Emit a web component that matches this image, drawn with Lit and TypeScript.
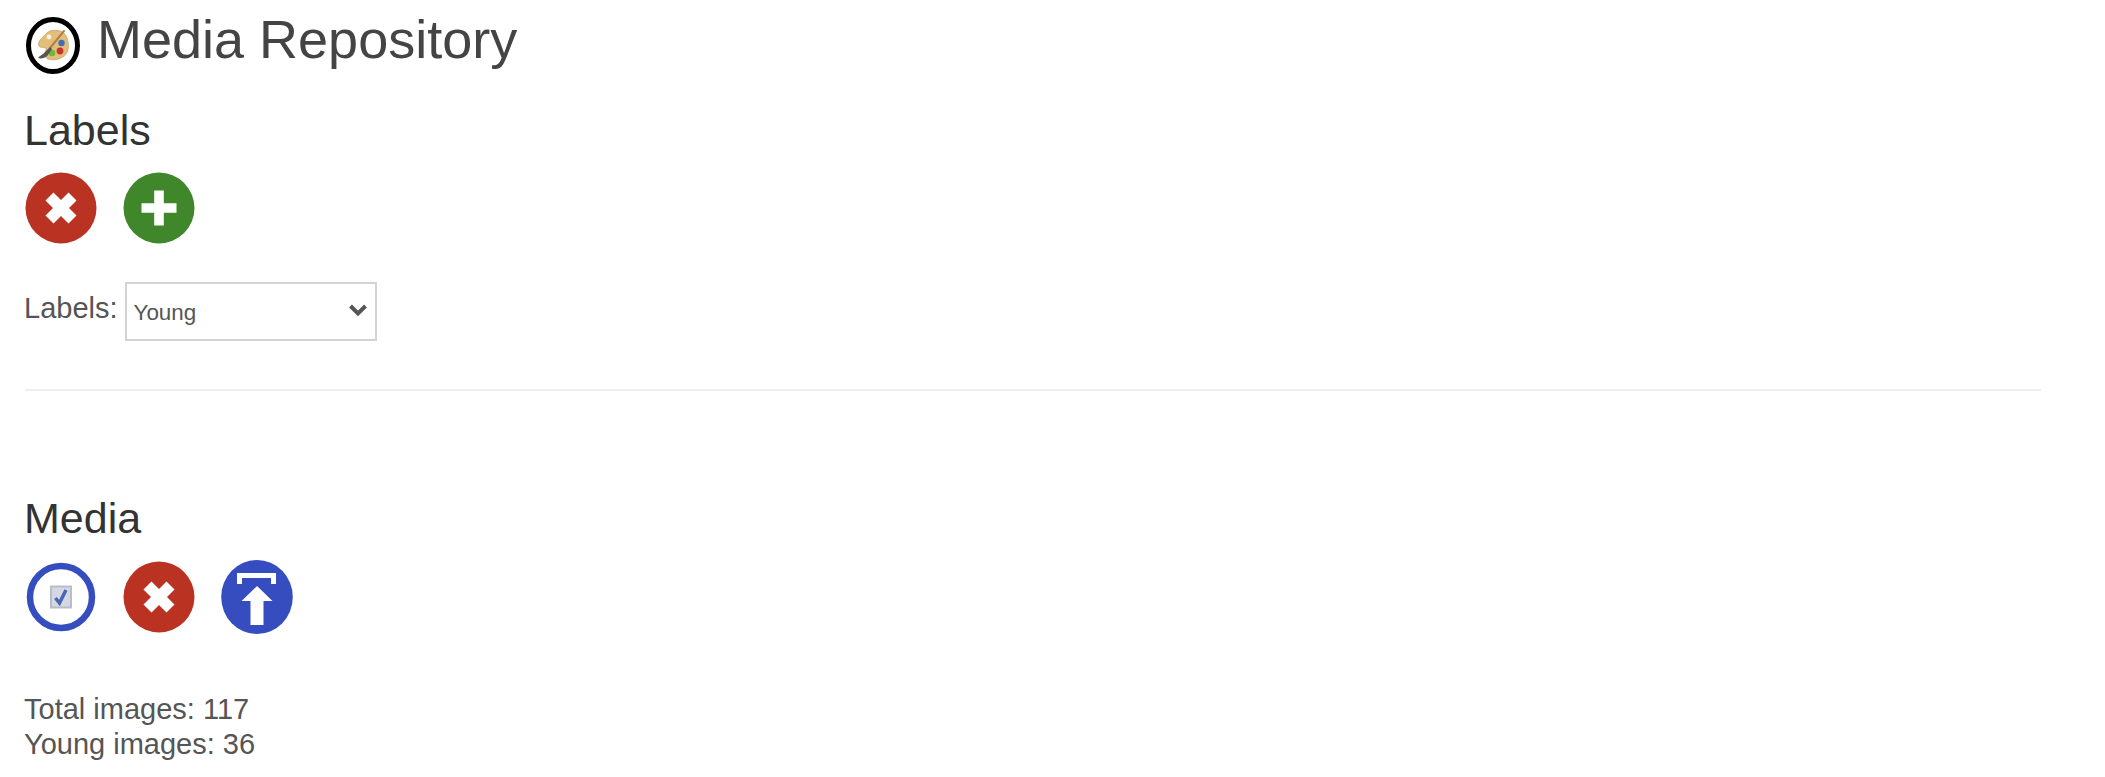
import { LitElement, html, css, svg } from "lit";
import { customElement } from "lit/decorators.js";

const removeIcon = svg`<circle cx="36" cy="36" r="35.5" fill="#b93222"/><path d="M20.500 28.500 28.500 20.500 36 28 43.500 20.500 51.500 28.500 44 36 51.500 43.500 43.500 51.500 36 44 28.500 51.500 20.500 43.500 28 36Z" fill="#fff"/>`;
const addIcon = svg`<circle cx="36" cy="36" r="35.5" fill="#40862b"/><path d="M31.200 18.500H40.800V31.200H53.500V40.800H40.800V53.500H31.200V40.800H18.500V31.200H31.200Z" fill="#fff"/>`;

@customElement("app-root")
export class AppRoot extends LitElement {
  static styles = css`
    :host { display: block; font-family: "Liberation Sans", Arial, sans-serif; color: #555; background: #fff; }
    .page { padding: 0 64px 0 24px; height: 777px; box-sizing: border-box; overflow: hidden; }
    .title { display: flex; align-items: center; gap: 17px; height: 82px; }
    .logo { width: 54px; height: 58px; flex: none; margin-top: 10px; margin-left: 2px; }
    h1 { margin: 0 0 3px; font-size: 54px; font-weight: 400; line-height: 79px; color: #444; }
    h2 { margin: 0; font-size: 43px; font-weight: 400; line-height: 56px; color: #333; }
    .labels-h { margin-top: 20px; }
    .icons { display: flex; gap: 26px; align-items: center; margin: 14px 0 0 1px; }
    .icons svg { display: block; width: 72px; height: 72px; flex: none; }
    .icons svg.upload { height: 74px; }
    .picker { display: flex; align-items: flex-start; gap: 7px; margin-top: 38px; font-size: 29px; line-height: 35px; }
    .picker label { padding-top: 9px; }
    .select { width: 252px; height: 59px; box-sizing: border-box; border: 2px solid #d3d3d3; display: flex; align-items: center; justify-content: space-between; padding: 0 7px; font-size: 22.4px; color: #555; }
    .select svg { width: 20px; height: 14px; margin-top: -4px; }
    .select span { padding-top: 1px; }
    hr { border: 0; height: 2px; background: #eee; margin: 48px 0 0 1px; }
    .media-h { margin-top: 99px; }
    .icons.media { margin-top: 14px; }
    .stats { margin-top: 58px; font-size: 29px; line-height: 35px; }
  `;

  render() {
    return html`<div class="page">
      <div class="title">
        <svg class="logo" viewBox="0 0 54 58">
          <ellipse cx="27" cy="28.500" rx="24.500" ry="26" fill="#fff" stroke="#000" stroke-width="5"/>
          <path d="M24 14c7-2 15 0 17 7 2 6 2 12-1 16-4 5-11 7-18 5-3-1-3-5-2-9 1-3-3-2-6-3-3-2-1-7 3-10 2-3 5-5 7-6Z" fill="#e3bd7a" stroke="#c39a5b" stroke-width=".7"/>
          <circle cx="23" cy="20" r="2.400" fill="#fff3d8"/>
          <circle cx="35.500" cy="26" r="3.200" fill="#3f6fb5"/>
          <circle cx="34" cy="34" r="3.400" fill="#c7362e"/>
          <circle cx="26" cy="36" r="3.200" fill="#6cb83f"/>
          <path d="M38 14 24 31" stroke="#b0824a" stroke-width="2" stroke-linecap="round"/>
          <path d="M24 30 19 35c-2 3-5 3-7 6 3 1 8 0 10-3l4-6Z" fill="#555"/>
        </svg>
        <h1>Media Repository</h1>
      </div>
      <h2 class="labels-h">Labels</h2>
      <div class="icons">
        <svg viewBox="0 0 72 72">${removeIcon}</svg>
        <svg viewBox="0 0 72 72">${addIcon}</svg>
      </div>
      <div class="picker">
        <label>Labels:</label>
        <div class="select"><span>Young</span>
          <svg viewBox="0 0 20 14"><path d="M2.500 3 10 10.500 17.500 3" fill="none" stroke="#555" stroke-width="4"/></svg>
        </div>
      </div>
      <hr />
      <h2 class="media-h">Media</h2>
      <div class="icons media">
        <svg viewBox="0 0 72 72">
          <circle cx="36" cy="36" r="31" fill="#fff" stroke="#364dbf" stroke-width="6.500"/>
          <rect x="26" y="25.500" width="20" height="21" fill="#d5d8e3" stroke="#b9bdc9" stroke-width="2"/>
          <path d="M30.500 37 34.500 42 41 29" fill="none" stroke="#4a65b5" stroke-width="3.500"/>
        </svg>
        <svg viewBox="0 0 72 72">${removeIcon}</svg>
        <svg class="upload" viewBox="0 0 72 74">
          <ellipse cx="36" cy="37" rx="35.800" ry="37" fill="#364dbf"/>
          <path d="M16 13H55V24H50V18H21V24H16Z" fill="#fff"/>
          <path d="M36 26 51.500 41H42.500V65H29.500V41H20.500Z" fill="#fff"/>
        </svg>
      </div>
      <div class="stats">
        <div>Total images: 117</div>
        <div>Young images: 36</div>
      </div>
    </div>`;
  }
}
